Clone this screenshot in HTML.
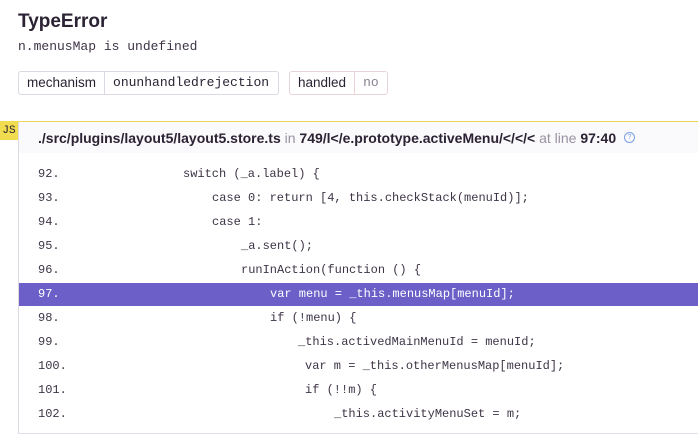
<!DOCTYPE html>
<html><head><style>
body{margin:0;width:698px;height:441px;background:#fff;overflow:hidden;font-family:"Liberation Sans",sans-serif;color:#2b2233;position:relative}
.a{position:absolute;white-space:pre}
.m{font-family:"Liberation Mono",monospace}
.tag{position:absolute;top:71px;height:24px;border:1px solid #ddd8e2;border-radius:3px;display:flex;font-size:13.5px;box-sizing:border-box}
.tag span{padding:0 8px;line-height:22px}
.code{font-family:"Liberation Mono",monospace;font-size:12px;color:#3e3446}
.ln{position:absolute;left:38px}
</style></head><body>
<div class="a" style="left:18px;top:11px;font-size:19px;font-weight:bold">TypeError</div>
<div class="a m" style="left:18px;top:39px;font-size:13px;color:#3e3446">n.menusMap is undefined</div>
<div class="tag" style="left:18px;width:261px"><span>mechanism</span><span class="m" style="border-left:1px solid #ddd8e2;font-size:13px">onunhandledrejection</span></div>
<div class="tag" style="left:289px;width:99px;border-color:#e8d4d6"><span>handled</span><span class="m" style="border-left:1px solid #ecd4d6;color:#8a7f90;font-size:13px">no</span></div>
<div style="position:absolute;left:18px;top:121px;width:680px;height:313px;border-left:1px solid #ddd8e2;border-top:1px solid #ecd65a;border-bottom:1px solid #e3dfe8;box-sizing:border-box"></div>
<div style="position:absolute;left:19px;top:122px;width:679px;height:31px;background:#faf9fb"></div>
<div class="a" style="left:0;top:121px;width:18px;height:19px;background:#f0dc4e;font-size:11px;text-align:center;line-height:19px"><span class="m">JS</span></div>
<div class="a" style="left:38px;top:130px;font-size:14px;font-weight:bold">./src/plugins/layout5/layout5.store.ts <span style="font-weight:normal;color:#9a92a2">in</span> 749/l&lt;/e.prototype.activeMenu/&lt;/&lt;/&lt; <span style="font-weight:normal;color:#9a92a2">at line</span> 97:40</div>
<div class="a" style="left:624px;top:132px;width:9px;height:9px;border:1px solid #7b9ee8;border-radius:50%;font-size:7px;color:#7b9ee8;text-align:center;line-height:9px">?</div>
<div style="position:absolute;left:19px;top:283px;width:679px;height:23px;background:#6c5fc7"></div>
<div class="code">
<div class="a ln" style="top:167px">92.</div><div class="a" style="left:183px;top:167px">switch (_a.label) {</div>
<div class="a ln" style="top:191px">93.</div><div class="a" style="left:212px;top:191px">case 0: return [4, this.checkStack(menuId)];</div>
<div class="a ln" style="top:215px">94.</div><div class="a" style="left:212px;top:215px">case 1:</div>
<div class="a ln" style="top:239px">95.</div><div class="a" style="left:241px;top:239px">_a.sent();</div>
<div class="a ln" style="top:263px">96.</div><div class="a" style="left:241px;top:263px">runInAction(function () {</div>
<div class="a ln" style="top:287px;color:#fff">97.</div><div class="a" style="left:270px;top:287px;color:#fff">var menu = _this.menusMap[menuId];</div>
<div class="a ln" style="top:311px">98.</div><div class="a" style="left:270px;top:311px">if (!menu) {</div>
<div class="a ln" style="top:335px">99.</div><div class="a" style="left:298px;top:335px">_this.activedMainMenuId = menuId;</div>
<div class="a ln" style="top:359px">100.</div><div class="a" style="left:305px;top:359px">var m = _this.otherMenusMap[menuId];</div>
<div class="a ln" style="top:383px">101.</div><div class="a" style="left:305px;top:383px">if (!!m) {</div>
<div class="a ln" style="top:407px">102.</div><div class="a" style="left:334px;top:407px">_this.activityMenuSet = m;</div>
</div>
</body></html>
